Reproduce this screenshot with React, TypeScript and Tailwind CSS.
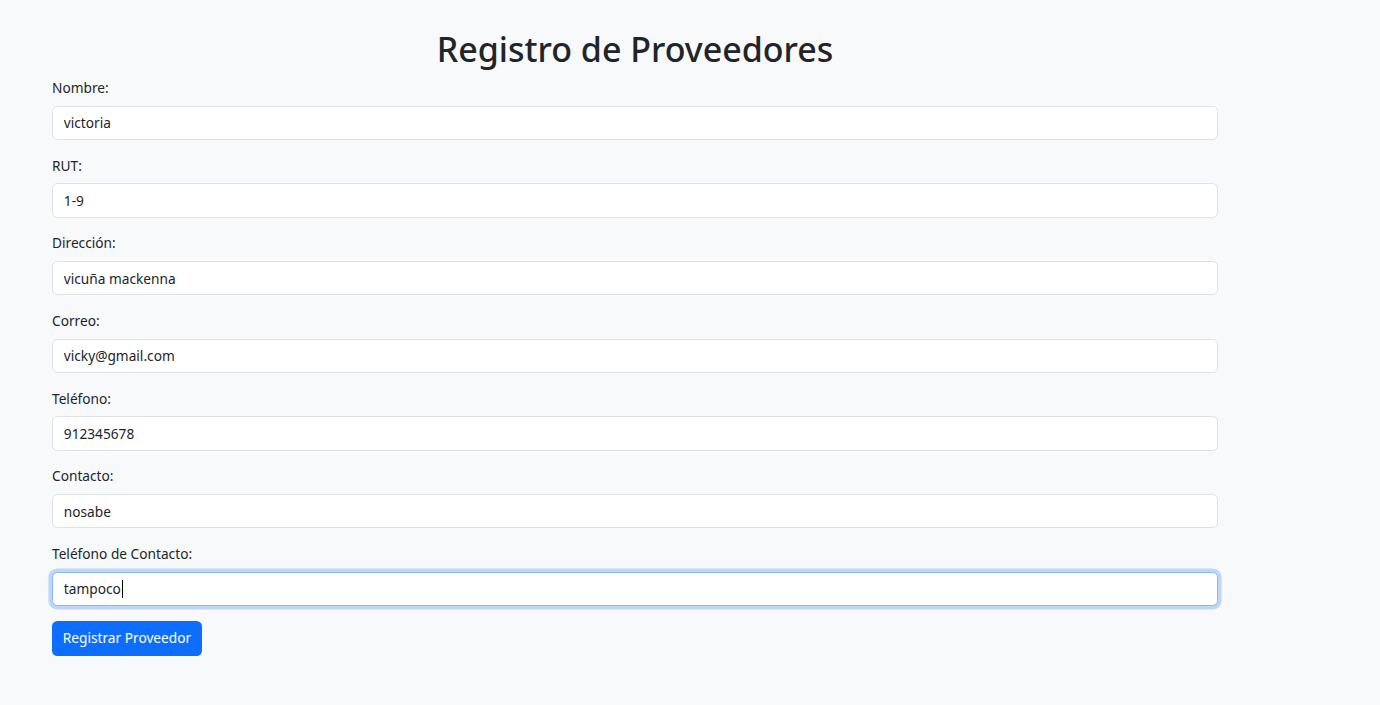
const fields = [
  { label: "Nombre:", value: "victoria" },
  { label: "RUT:", value: "1-9" },
  { label: "Dirección:", value: "vicuña mackenna" },
  { label: "Correo:", value: "vicky@gmail.com" },
  { label: "Teléfono:", value: "912345678" },
  { label: "Contacto:", value: "nosabe" },
];

const App = () => {
  return (
    <main className="min-h-[705px] bg-[#f8f9fa] text-[#212529] font-['Noto_Sans',sans-serif]">
      <div className="ml-[41px] w-[1188px] px-[11px] pt-[28px]">
        <h1 className="mb-[6px] text-center text-[34px] leading-[43px] font-medium">Registro de Proveedores</h1>

        <form>
          {fields.map((f) => (
            <div key={f.label} className="mb-[14.7px]">
              <label className="mb-[7.2px] block text-[13.7px] leading-[21.6px]">{f.label}</label>
              <input
                readOnly
                value={f.value}
                className="block h-[34.2px] w-full rounded-[5.4px] border border-[#dee2e6] bg-white px-[10.8px] text-[13.7px] text-[#212529] outline-none"
              />
            </div>
          ))}

          <div className="mb-[14.7px]">
            <label className="mb-[7.2px] block text-[13.7px] leading-[21.6px]">Teléfono de Contacto:</label>
            <div className="flex h-[34.2px] w-full items-center rounded-[5.4px] border border-[#86b7fe] bg-white px-[10.8px] text-[13.7px] shadow-[0_0_0_3.6px_rgba(13,110,253,0.25)]">
              <span>tampoco</span>
              <span className="ml-px h-[18px] w-px bg-black"></span>
            </div>
          </div>

          <button
            type="button"
            className="h-[35px] rounded-[5.4px] bg-[#0d6efd] px-[10.8px] text-[13.7px] text-white"
          >
            Registrar Proveedor
          </button>
        </form>
      </div>
    </main>
  );
};

export default App;
